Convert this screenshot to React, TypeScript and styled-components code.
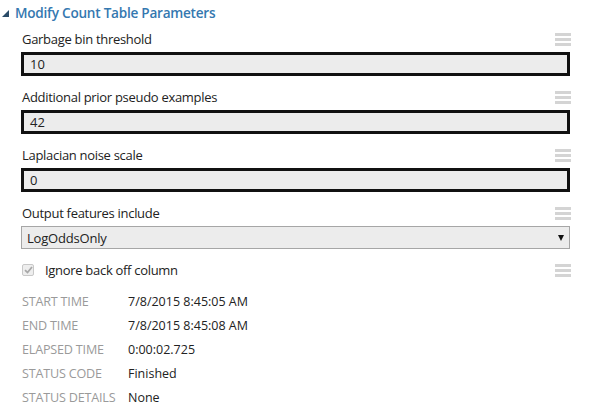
import React from "react";
import styled, { createGlobalStyle } from "styled-components";

const GlobalStyle = createGlobalStyle`
  body {
    margin: 0;
    background: #fff;
    font-family: "Open Sans", "Noto Sans", sans-serif;
  }
`;

const Panel = styled.div`
  width: 608px;
  height: 414px;
  overflow: hidden;
  padding: 2px 0 0 0;
  box-sizing: border-box;
`;

const Header = styled.div`
  display: flex;
  align-items: center;
  height: 20px;
  padding-left: 2px;
  gap: 6px;
`;

const Caret = styled.span`
  width: 0;
  height: 0;
  border-left: 7px solid transparent;
  border-bottom: 7px solid #2a4b68;
  margin-top: 3px;
`;

const Title = styled.h2`
  margin: 0;
  font-size: 13.6px;
  letter-spacing: -0.25px;
  font-weight: 600;
  color: #3478b0;
`;

const Body = styled.div`
  padding: 7px 38px 0 21px;
`;

const Field = styled.div`
  display: flex;
  flex-direction: column;
  margin-bottom: 11px;
`;

const LabelRow = styled.div`
  display: flex;
  justify-content: space-between;
  align-items: center;
  height: 20px;
  margin-bottom: 3px;
  margin-right: -1px;
`;

const Label = styled.span`
  font-size: 13px;
  letter-spacing: -0.3px;
  color: #222;
  padding-left: 1px;
`;

const Handle = styled.span`
  display: flex;
  flex-direction: column;
  gap: 2px;
  width: 16px;
  span {
    display: block;
    height: 3px;
    background: #d4d4d4;
  }
`;

const TextBox = styled.div`
  height: 24px;
  border: 3px solid #111;
  background: #ececec;
  box-sizing: border-box;
  font-size: 13px;
  color: #222;
  display: flex;
  align-items: center;
  padding-left: 6px;
`;

const Select = styled.div`
  height: 23px;
  border: 1px solid #a6a6a6;
  background: #ececec;
  box-sizing: border-box;
  font-size: 13px;
  letter-spacing: -0.2px;
  color: #222;
  display: flex;
  align-items: center;
  justify-content: space-between;
  padding: 0 5px 0 5px;
`;

const Arrow = styled.span`
  width: 0;
  height: 0;
  border-left: 3px solid transparent;
  border-right: 3px solid transparent;
  border-top: 6px solid #111;
`;

const CheckRow = styled.div`
  display: flex;
  align-items: center;
  justify-content: space-between;
  height: 20px;
  margin-top: 2px;
  margin-right: -1px;
`;

const CheckLabel = styled.label`
  display: flex;
  align-items: center;
  gap: 11px;
  font-size: 13px;
  letter-spacing: -0.3px;
  color: #222;
  padding-left: 1px;
`;

const Box = styled.span`
  width: 10px;
  height: 10px;
  border: 1px solid #c8c8c8;
  border-radius: 2px;
  background: #eee;
  display: flex;
  align-items: center;
  justify-content: center;
`;

const Stats = styled.div`
  display: grid;
  grid-template-columns: 106px 1fr;
  margin-top: 10px;
  padding-left: 1px;
`;

const StatKey = styled.span`
  font-size: 12.6px;
  letter-spacing: -0.2px;
  color: #9a9a9a;
  height: 24px;
  line-height: 24px;
  text-transform: uppercase;
`;

const StatValue = styled.span`
  font-size: 12.5px;
  color: #222;
  height: 24px;
  line-height: 24px;
`;

const Grip = () => (
  <Handle>
    <span />
    <span />
    <span />
  </Handle>
);

const fields = [
  { label: "Garbage bin threshold", value: "10" },
  { label: "Additional prior pseudo examples", value: "42" },
  { label: "Laplacian noise scale", value: "0" },
];

const stats = [
  ["Start time", "7/8/2015 8:45:05 AM"],
  ["End time", "7/8/2015 8:45:08 AM"],
  ["Elapsed time", "0:00:02.725"],
  ["Status code", "Finished"],
  ["Status details", "None"],
];

const App: React.FC = () => {
  return (
    <Panel>
      <GlobalStyle />
      <Header>
        <Caret />
        <Title>Modify Count Table Parameters</Title>
      </Header>
      <Body>
        {fields.map((f) => (
          <Field key={f.label}>
            <LabelRow>
              <Label>{f.label}</Label>
              <Grip />
            </LabelRow>
            <TextBox>{f.value}</TextBox>
          </Field>
        ))}
        <Field>
          <LabelRow>
            <Label>Output features include</Label>
            <Grip />
          </LabelRow>
          <Select>
            LogOddsOnly
            <Arrow />
          </Select>
        </Field>
        <CheckRow>
          <CheckLabel>
            <Box>
              <svg width="9" height="8" viewBox="0 0 9 8">
                <path d="M1 4.2 L3.5 6.5 L8 1" stroke="#a8a8a8" strokeWidth="1.8" fill="none" />
              </svg>
            </Box>
            Ignore back off column
          </CheckLabel>
          <Grip />
        </CheckRow>
        <Stats>
          {stats.map(([k, v]) => (
            <React.Fragment key={k}>
              <StatKey>{k}</StatKey>
              <StatValue>{v}</StatValue>
            </React.Fragment>
          ))}
        </Stats>
      </Body>
    </Panel>
  );
};

export default App;
